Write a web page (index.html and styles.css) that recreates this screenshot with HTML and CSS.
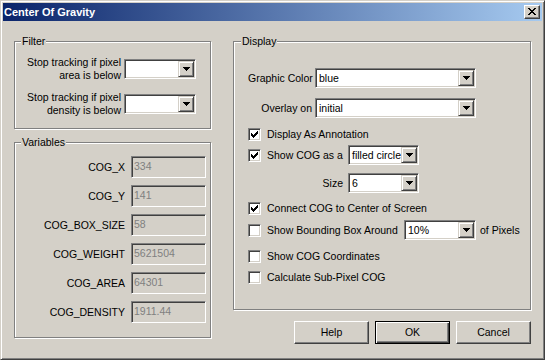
FILE: index.html
```html
<!DOCTYPE html>
<html>
<head>
<meta charset="utf-8">
<title>Center Of Gravity</title>
<link rel="stylesheet" href="styles.css">
</head>
<body>
<div class="window">
  <div class="titlebar">
    <span class="title">Center Of Gravity</span>
    <span class="close-btn"><svg width="8" height="7" viewBox="0 0 8 7" shape-rendering="crispEdges"><path d="M0 0h2v1H0zM6 0h2v1H6zM1 1h2v1H1zM5 1h2v1H5zM2 2h4v1H2zM3 3h2v1H3zM2 4h4v1H2zM1 5h2v1H1zM5 5h2v1H5zM0 6h2v1H0zM6 6h2v1H6z"/></svg></span>
  </div>
  <div class="content">
    <div class="col-left">
      <fieldset class="group filter">
        <legend>Filter</legend>
        <div class="frow">
          <span class="flabel">Stop tracking if pixel<br>area is below</span>
          <div class="combo w72"><span class="combo-text"></span><span class="drop"><svg width="7" height="4" viewBox="0 0 7 4" shape-rendering="crispEdges"><path d="M0 0h7v1H0zM1 1h5v1H1zM2 2h3v1H2zM3 3h1v1H3z"/></svg></span></div>
        </div>
        <div class="frow">
          <span class="flabel">Stop tracking if pixel<br>density is below</span>
          <div class="combo w72"><span class="combo-text"></span><span class="drop"><svg width="7" height="4" viewBox="0 0 7 4" shape-rendering="crispEdges"><path d="M0 0h7v1H0zM1 1h5v1H1zM2 2h3v1H2zM3 3h1v1H3z"/></svg></span></div>
        </div>
      </fieldset>
      <fieldset class="group vars">
        <legend>Variables</legend>
        <div class="vrow"><span class="vlabel">COG_X</span><span class="field">334</span></div>
        <div class="vrow"><span class="vlabel">COG_Y</span><span class="field">141</span></div>
        <div class="vrow"><span class="vlabel">COG_BOX_SIZE</span><span class="field">58</span></div>
        <div class="vrow"><span class="vlabel">COG_WEIGHT</span><span class="field">5621504</span></div>
        <div class="vrow"><span class="vlabel">COG_AREA</span><span class="field">64301</span></div>
        <div class="vrow"><span class="vlabel">COG_DENSITY</span><span class="field">1911.44</span></div>
      </fieldset>
    </div>
    <div class="col-right">
      <fieldset class="group display">
        <legend>Display</legend>
        <div class="display-body">
          <div class="drow">
            <span class="dlabel">Graphic Color</span>
            <div class="combo w161"><span class="combo-text">blue</span><span class="drop"><svg width="7" height="4" viewBox="0 0 7 4" shape-rendering="crispEdges"><path d="M0 0h7v1H0zM1 1h5v1H1zM2 2h3v1H2zM3 3h1v1H3z"/></svg></span></div>
          </div>
          <div class="drow mt10">
            <span class="dlabel">Overlay on</span>
            <div class="combo w161"><span class="combo-text">initial</span><span class="drop"><svg width="7" height="4" viewBox="0 0 7 4" shape-rendering="crispEdges"><path d="M0 0h7v1H0zM1 1h5v1H1zM2 2h3v1H2zM3 3h1v1H3z"/></svg></span></div>
          </div>
          <div class="crow mt10">
            <span class="chk"><svg width="9" height="9" viewBox="0 0 9 9" shape-rendering="crispEdges"><path d="M1 3h1v3H1zM2 4h1v3H2zM3 5h1v3H3zM4 4h1v3H4zM5 3h1v3H5zM6 2h1v3H6zM7 1h1v3H7z"/></svg></span>
            <span class="ctext">Display As Annotation</span>
          </div>
          <div class="crow mt4">
            <span class="lcol">
              <span class="chk"><svg width="9" height="9" viewBox="0 0 9 9" shape-rendering="crispEdges"><path d="M1 3h1v3H1zM2 4h1v3H2zM3 5h1v3H3zM4 4h1v3H4zM5 3h1v3H5zM6 2h1v3H6zM7 1h1v3H7z"/></svg></span>
              <span class="ctext">Show COG as a</span>
            </span>
            <div class="combo w71"><span class="combo-text">filled circle</span><span class="drop"><svg width="7" height="4" viewBox="0 0 7 4" shape-rendering="crispEdges"><path d="M0 0h7v1H0zM1 1h5v1H1zM2 2h3v1H2zM3 3h1v1H3z"/></svg></span></div>
          </div>
          <div class="crow mt8">
            <span class="lcol right">Size</span>
            <div class="combo w71"><span class="combo-text">6</span><span class="drop"><svg width="7" height="4" viewBox="0 0 7 4" shape-rendering="crispEdges"><path d="M0 0h7v1H0zM1 1h5v1H1zM2 2h3v1H2zM3 3h1v1H3z"/></svg></span></div>
          </div>
          <div class="crow mt9">
            <span class="chk"><svg width="9" height="9" viewBox="0 0 9 9" shape-rendering="crispEdges"><path d="M1 3h1v3H1zM2 4h1v3H2zM3 5h1v3H3zM4 4h1v3H4zM5 3h1v3H5zM6 2h1v3H6zM7 1h1v3H7z"/></svg></span>
            <span class="ctext">Connect COG to Center of Screen</span>
          </div>
          <div class="crow mt5">
            <span class="lcol wide">
              <span class="chk"></span>
              <span class="ctext">Show Bounding Box Around</span>
            </span>
            <div class="combo w72"><span class="combo-text">10%</span><span class="drop"><svg width="7" height="4" viewBox="0 0 7 4" shape-rendering="crispEdges"><path d="M0 0h7v1H0zM1 1h5v1H1zM2 2h3v1H2zM3 3h1v1H3z"/></svg></span></div>
            <span class="after">of Pixels</span>
          </div>
          <div class="crow mt10">
            <span class="chk"></span>
            <span class="ctext">Show COG Coordinates</span>
          </div>
          <div class="crow mt8">
            <span class="chk"></span>
            <span class="ctext">Calculate Sub-Pixel COG</span>
          </div>
        </div>
      </fieldset>
      <div class="buttons">
        <button class="btn">Help</button>
        <button class="btn default">OK</button>
        <button class="btn">Cancel</button>
      </div>
    </div>
  </div>
</div>
</body>
</html>
```

FILE: styles.css
```css
html, body {
  margin: 0;
  padding: 0;
  background: #d4d0c8;
}

body {
  font-family: "Liberation Sans", Arial, sans-serif;
  font-size: 10.5px;
  color: #000;
}

.window {
  width: 545px;
  height: 360px;
  box-sizing: border-box;
  border: 1px solid;
  border-color: #d4d0c8 #404040 #404040 #d4d0c8;
  box-shadow: inset 1px 1px #fff, inset -1px -1px #808080;
  padding: 2px;
  background: #d4d0c8;
}

.titlebar {
  height: 18px;
  display: flex;
  align-items: center;
  justify-content: space-between;
  padding: 0 2px 0 1px;
  background: linear-gradient(to right, #0a246a, #a6caf0);
}

.title {
  color: #fff;
  font-weight: bold;
  font-size: 11px;
  line-height: 13px;
}

.close-btn {
  width: 16px;
  height: 14px;
  box-sizing: border-box;
  border: 1px solid;
  border-color: #fff #404040 #404040 #fff;
  box-shadow: inset -1px -1px #808080;
  background: #d4d0c8;
  display: flex;
  align-items: center;
  justify-content: center;
  padding-bottom: 1px;
}

.content {
  display: flex;
  gap: 22px;
  padding: 14px 0 0 11px;
}

.col-left {
  width: 197px;
  display: flex;
  flex-direction: column;
}

.col-right {
  width: 298px;
  display: flex;
  flex-direction: column;
}

.group {
  margin: 0;
  min-width: 0;
  border: 1px solid #808080;
  box-shadow: 1px 1px 0 #fff, inset 1px 1px 0 #fff;
}

.group legend {
  padding: 0 1px;
  line-height: 13px;
  background: #d4d0c8;
}

.filter {
  padding: 8px 14px 11px 6px;
  display: flex;
  flex-direction: column;
  gap: 9px;
}

.frow {
  display: flex;
  justify-content: flex-end;
  align-items: center;
  gap: 3px;
}

.flabel {
  text-align: right;
  line-height: 13px;
}

.vars {
  margin-top: 7px;
  padding: 7px 4px 14px 6px;
  display: flex;
  flex-direction: column;
  gap: 7px;
}

.vrow {
  display: flex;
  justify-content: flex-end;
  align-items: center;
  gap: 6px;
}

.field {
  width: 75px;
  height: 22px;
  box-sizing: border-box;
  border: 1px solid;
  border-color: #808080 #fff #fff #808080;
  box-shadow: inset 1px 1px #404040, inset -1px -1px #d4d0c8;
  padding: 1px 2px 0 2px;
  line-height: 16px;
  color: #808080;
}

.combo {
  display: flex;
  height: 20px;
  box-sizing: border-box;
  border: 1px solid;
  border-color: #808080 #fff #fff #808080;
  box-shadow: inset 1px 1px #404040, inset -1px -1px #d4d0c8;
  background: #fff;
  padding: 1px;
}

.w72 { width: 72px; }
.w71 { width: 71px; }
.w161 { width: 161px; }

.combo-text {
  flex: 1;
  min-width: 0;
  overflow: hidden;
  white-space: nowrap;
  padding-left: 2px;
  line-height: 16px;
}

.drop {
  flex: none;
  width: 16px;
  height: 16px;
  box-sizing: border-box;
  border: 1px solid;
  border-color: #d4d0c8 #404040 #404040 #d4d0c8;
  box-shadow: inset 1px 1px #fff, inset -1px -1px #808080;
  background: #d4d0c8;
  display: flex;
  align-items: center;
  justify-content: center;
}

.display {
  padding: 20px 0 25px 7px;
}

.display-body {
  padding-left: 7px;
  display: flex;
  flex-direction: column;
}

.drow {
  display: flex;
  align-items: center;
}

.dlabel {
  width: 64px;
  margin-right: 3px;
  text-align: right;
  white-space: nowrap;
}

.crow {
  display: flex;
  align-items: center;
  line-height: 13px;
}

.mt4 { margin-top: 4px; }
.mt5 { margin-top: 5px; }
.mt8 { margin-top: 8px; }
.mt9 { margin-top: 9px; }
.mt10 { margin-top: 10px; }

.chk {
  flex: none;
  width: 13px;
  height: 13px;
  box-sizing: border-box;
  border: 1px solid;
  border-color: #808080 #fff #fff #808080;
  box-shadow: inset 1px 1px #404040, inset -1px -1px #d4d0c8;
  background: #fff;
  display: flex;
  align-items: center;
  justify-content: center;
}

.ctext {
  margin-left: 6px;
  white-space: nowrap;
}

.lcol {
  width: 95px;
  margin-right: 5px;
  display: flex;
  align-items: center;
  white-space: nowrap;
}

.lcol.right {
  justify-content: flex-end;
}

.lcol.wide {
  width: 151px;
}

.after {
  margin-left: 4px;
  white-space: nowrap;
}

.buttons {
  margin-top: 11px;
  display: flex;
  justify-content: flex-end;
  gap: 6px;
}

.btn {
  width: 75px;
  height: 23px;
  box-sizing: border-box;
  margin: 0;
  padding: 0;
  border: 1px solid;
  border-color: #fff #404040 #404040 #fff;
  box-shadow: inset -1px -1px #808080;
  background: #d4d0c8;
  font: inherit;
  color: #000;
  line-height: 13px;
}

.btn.default {
  border-color: #000;
  box-shadow: inset 1px 1px #fff, inset -1px -1px #404040, inset -2px -2px #808080;
}
```
